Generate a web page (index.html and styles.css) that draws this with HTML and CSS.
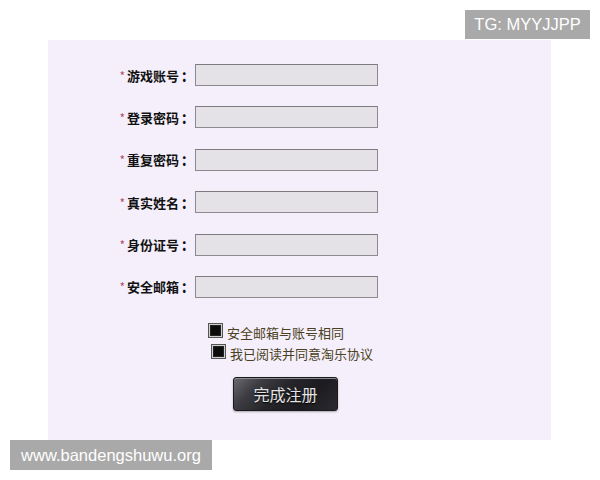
FILE: index.html
```html
<!DOCTYPE html>
<html lang="zh">
<head>
<meta charset="utf-8">
<title>注册</title>
<link rel="stylesheet" href="styles.css">
</head>
<body>
<div class="tg">TG: MYYJJPP</div>
<div class="panel">
  <div class="form">
    <label class="lbl"><span class="req">*</span>游戏账号<span class="colon">：</span></label><span class="input"></span>
    <label class="lbl"><span class="req">*</span>登录密码<span class="colon">：</span></label><span class="input"></span>
    <label class="lbl"><span class="req">*</span>重复密码<span class="colon">：</span></label><span class="input"></span>
    <label class="lbl"><span class="req">*</span>真实姓名<span class="colon">：</span></label><span class="input"></span>
    <label class="lbl"><span class="req">*</span>身份证号<span class="colon">：</span></label><span class="input"></span>
    <label class="lbl"><span class="req">*</span>安全邮箱<span class="colon">：</span></label><span class="input"></span>
  </div>
  <div class="checks">
    <div class="check c1"><span class="box"></span><span class="ctext">安全邮箱与账号相同</span></div>
    <div class="check c2"><span class="box"></span><span class="ctext">我已阅读并同意淘乐协议</span></div>
  </div>
  <div class="btnrow"><span class="btn">完成注册</span></div>
</div>
<div class="wm">www.bandengshuwu.org</div>
</body>
</html>
```
FILE: styles.css
```css
html, body {
  margin: 0;
  padding: 0;
  background: #ffffff;
}
body {
  width: 600px;
  height: 480px;
  position: relative;
  overflow: hidden;
  font-family: "Noto Sans CJK SC", "Liberation Sans", sans-serif;
}
.panel {
  margin: 40px 0 0 48px;
  width: 503px;
  height: 400px;
  background: #f4effb;
  box-sizing: border-box;
  padding-top: 24px;
}
.form {
  display: grid;
  grid-template-columns: 144px 183px;
  column-gap: 3px;
  row-gap: 20.4px;
}
.lbl {
  display: flex;
  justify-content: flex-end;
  align-items: center;
  font-size: 13px;
  font-weight: bold;
  color: #111;
  height: 22px;
}
.colon {
  display: inline-block;
  width: 13px;
  padding-left: 2px;
  box-sizing: border-box;
  font-weight: 900;
}
.req {
  color: #b0506a;
  font-weight: normal;
  font-size: 12px;
  margin-right: 2px;
}
.input {
  display: block;
  height: 22px;
  box-sizing: border-box;
  border: 1px solid #8c8a8e;
  border-top-color: #7d7b80;
  background: #e4e2e6;
}
.checks {
  margin-top: 25px;
  display: flex;
  flex-direction: column;
  gap: 6px;
}
.check {
  display: flex;
  align-items: center;
  height: 15px;
}
.c1 { padding-left: 160px; }
.c2 { padding-left: 163px; }
.box {
  width: 15px;
  height: 15px;
  box-sizing: border-box;
  background: #0c0c0c;
  border: 1px solid #555;
  box-shadow: inset 0 0 0 1px #cfcfcf, inset 0 0 0 2px #222;
}
.ctext {
  margin-left: 4px;
  font-size: 13px;
  color: #4b3f22;
  line-height: 15px;
  position: relative;
  top: 2px;
}
.btnrow {
  margin-top: 18px;
  padding-left: 185px;
}
.btn {
  display: flex;
  align-items: center;
  justify-content: center;
  width: 105px;
  height: 34px;
  box-sizing: border-box;
  border-radius: 3px;
  border: 1px solid #1a1a1c;
  background: linear-gradient(135deg, #6a6a70 0%, #3c3c42 22%, #26262a 45%, #1c1c20 70%, #2a2a30 100%);
  box-shadow: inset 0 1px 0 #8a8a90, 0 1px 2px rgba(0,0,0,0.3);
  color: #e4e4e6;
  font-size: 16px;
  font-weight: normal;
  text-shadow: 0 1px 1px #000;
}
.tg {
  position: absolute;
  left: 465px;
  top: 10px;
  width: 125px;
  height: 29px;
  background: #a9a9a9;
  color: #ffffff;
  font-family: "Liberation Sans", "Noto Sans", sans-serif;
  font-size: 16.5px;
  display: flex;
  align-items: center;
  justify-content: center;
}
.wm {
  position: absolute;
  left: 10px;
  top: 440px;
  width: 202px;
  height: 30px;
  background: #a9a9a9;
  color: #ffffff;
  font-family: "Liberation Sans", "Noto Sans", sans-serif;
  font-size: 16.5px;
  display: flex;
  align-items: center;
  justify-content: center;
}
```
